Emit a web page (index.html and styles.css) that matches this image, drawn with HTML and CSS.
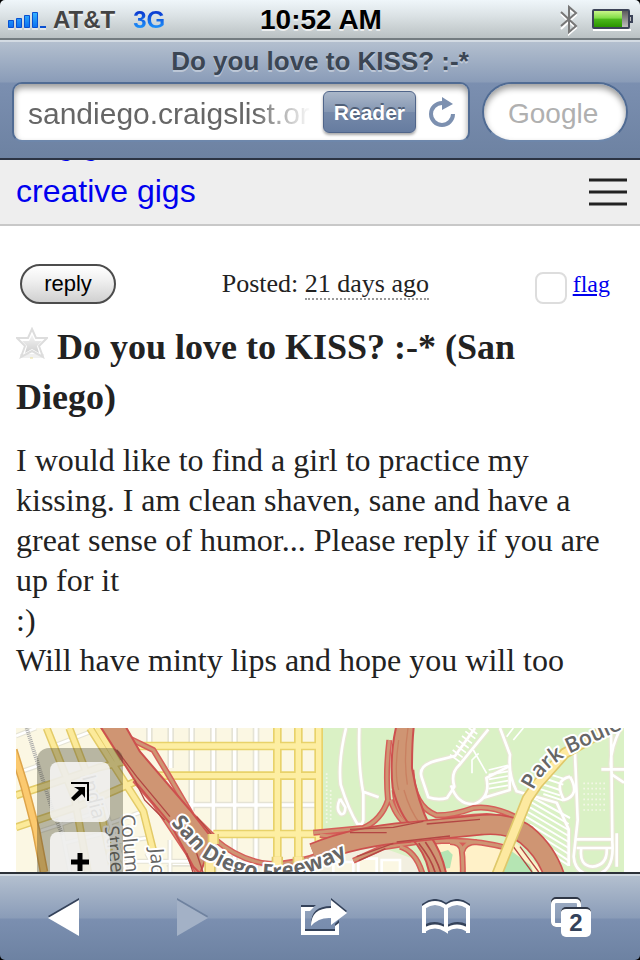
FILE: index.html
```html
<!DOCTYPE html>
<html lang="en">
<head>
    <meta charset="UTF-8">
    <meta name="viewport" content="width=device-width, initial-scale=1">
    <title>Do you love to KISS? :-*</title>
    <link rel="stylesheet" href="styles.css">
</head>
<body>
    <div class="phone">
        <div class="status-bar">
            <div class="carrier">
                <svg class="signal" width="39" height="20" viewBox="0 0 39 20" aria-hidden="true">
                    <defs>
                        <linearGradient id="bars" x1="0" y1="0" x2="0" y2="1">
                            <stop offset="0" stop-color="#35b4ff"/>
                            <stop offset="1" stop-color="#0a6ff0"/>
                        </linearGradient>
                    </defs>
                    <g fill="url(#bars)" stroke="#0a50d0">
                        <path d="M.5 10.500h5v7h-5zM8.500 8.500h5v9h-5zM16.500 5.500h5v12h-5zM24.500 2.500h5v15h-5z"/>
                    </g>
                    <path d="M32 16h6v2h-6z" fill="#0a50d0"/>
                    <path d="M0 19h6M8 19h6M16 19h6M24 19h6M32 19h6" stroke="#fff"/>
                </svg>
                <span>AT&amp;T</span>
                <span class="network">3G</span>
            </div>
            <div class="clock">10:52 AM</div>
            <div class="indicators">
                <svg width="18" height="32" viewBox="0 0 18 32" aria-hidden="true">
                    <path d="M1 9l15 14-7 6V4l7 6L1 24" fill="none" stroke="#fff" stroke-width="2" transform="translate(0 1)"/>
                    <path d="M1 8l15 14-7 6V3l7 6L1 22" fill="none" stroke="#777" stroke-width="2"/>
                </svg>
                <svg width="42" height="22" viewBox="0 0 42 22" aria-hidden="true">
                    <defs>
                        <linearGradient id="charge" x1="0" y1="0" x2="0" y2="1">
                            <stop offset="0" stop-color="#c9f58a"/>
                            <stop offset=".45" stop-color="#7fdc45"/>
                            <stop offset=".5" stop-color="#4cb81c"/>
                            <stop offset="1" stop-color="#2a9400"/>
                        </linearGradient>
                        <linearGradient id="empty" x1="0" y1="0" x2="0" y2="1">
                            <stop offset="0" stop-color="#555"/>
                            <stop offset="1" stop-color="#c4c4c4"/>
                        </linearGradient>
                    </defs>
                    <path d="M1 21h38" stroke="#fff" stroke-width="2"/>
                    <rect x="1" y="1" width="36" height="18" rx="1" fill="url(#empty)" stroke="#3c4358" stroke-width="2"/>
                    <path d="M2 2h28v16H2z" fill="url(#charge)"/>
                    <path d="M38 7h2v6h-2" fill="#bbb" stroke="#3c4358" stroke-width="2"/>
                </svg>
            </div>
        </div>

        <header class="browser-bar">
            <div class="page-title">Do you love to KISS? :-*</div>
            <form class="fields">
                <div class="field address">
                    <input type="text" class="url" aria-label="Address" value="sandiego.craigslist.org">
                    <button type="button" class="reader">Reader</button>
                    <button type="button" class="icon-button" aria-label="Reload">
                        <svg width="28" height="32" viewBox="0 0 28 32">
                            <path d="M14 7a11 11 0 1 0 11 11" fill="none" stroke="#7c90b0" stroke-width="4"/>
                            <path d="M14 1l11 7-11 6z" fill="#7c90b0"/>
                        </svg>
                    </button>
                </div>
                <input type="search" class="field search" aria-label="Search" placeholder="Google">
            </form>
        </header>

        <main class="page">
            <div class="breadcrumbs">
                <nav class="crumbs">
                    <a href="#">all gigs</a>
                    <a href="#">creative gigs</a>
                </nav>
                <button type="button" class="icon-button" aria-label="Menu">
                    <svg width="38" height="28" viewBox="0 0 38 28">
                        <path d="M0 2h38M0 14h38M0 26h38" stroke="#222" stroke-width="3"/>
                    </svg>
                </button>
            </div>

            <article class="posting">
                <div class="actions">
                    <button type="button" class="reply">reply</button>
                    <div class="posted">Posted: <time class="age">21 days ago</time></div>
                    <div class="flag">
                        <input type="checkbox" id="flag" aria-label="flag">
                        <a href="#">flag</a>
                    </div>
                </div>

                <h2 class="posting-title"><svg class="star" width="32" height="32" viewBox="0 0 32 32" aria-hidden="true">
                    <defs>
                        <linearGradient id="starfill" x1="0" y1="0" x2="0" y2="1">
                            <stop offset="0" stop-color="#f4f4f4"/>
                            <stop offset="1" stop-color="#d0d0d0"/>
                        </linearGradient>
                    </defs>
                    <path d="M4 29h24" stroke="#f0f0f0" stroke-width="4"/>
                    <path d="M16 2l4 9 11 0-8 8 4 11-11-6-11 6 4-11-8-8 11 0z" fill="#fff" stroke="#ddd" stroke-width="2"/>
                    <path d="M16 8l3 6 7 0-5 5 2 7-7-4-7 4 2-7-5-5 7 0z" fill="url(#starfill)"/>
                    <path d="M14 31h3" stroke="#eadf9a"/>
                </svg>Do you love to KISS? :-* (San Diego)</h2>

                <p class="posting-body">I would like to find a girl to practice my kissing. I am clean shaven, sane and have a great sense of humor... Please reply if you are up for it<br>:)<br>Will have minty lips and hope you will too</p>

                <div class="map">
                    <svg class="tiles" viewBox="48 24 1824 432" preserveAspectRatio="xMinYMin slice" role="img" aria-label="Map">
                        <defs>
                            <g id="grid-minor">
                                <path d="M448 24v60M512 24v120M575 24v250M640 24v432M704 24v432M768 24v432M560 255h400M500 430h460"/>
                            </g>
                            <g id="grid-major">
                                <path d="M832 24v432M895 24v432M956 24v340M400 78h560M470 167h490M640 342h320"/>
                            </g>
                            <g id="west-minor">
                                <path d="M48 48l60-24M160 78l110-42M48 160l70-24M100 340l170-56M330 310l110-40M190 370l200-50M320 370l120-16M380 424h240M510 360v96M180 300l30 156M310 250l70 206M440 400l30 56"/>
                            </g>
                            <g id="west-major">
                                <path d="M140 24l84 210 40 222M208 24l92 240 40 192M270 24l70 110 90 140 30 120M292 24l60 100M48 226l110-36 140-48 90-20M48 322l190-64 166-72"/>
                            </g>
                            <g id="park-paths">
                                <path d="M1038 24q-24 100-16 170 24 76 50 118h14l4-12V220q-16-80-12-196M1092 216l44 16M1020 236l16 26q0 24-14 20-16-14-2-46"/>
                                <path d="M1425 24l-60 84-56 14q-56 14-44 50l20 60q30 10 56 2l22-34q-12-40 14-64l88-108M1353 196q20 60 70 56 50-20 36-78l70-36v72l-80 24M1500 24l30 80q-6 60 20 110l120 34 36 80v110"/>
                                <path d="M1725 100l8 200-12 110q4 50 54 56 70-4 62-100l-4-340M1862 24q-40 80-26 140l36 24M1710 170q-50 10-18 70 50-14 18-70M1730 358h110M1730 384h110M1744 384q-8 54 34 56 46-6 42-56M1850 340v100M1804 148h68"/>
                            </g>
                            <g id="ramps">
                                <path d="M390 56l70 34 40 66 76 130 70 70M410 110l86 90 70 90M404 180l60 70 100 150 30 60"/>
                                <path d="M640 354q80 70 170 78 80 0 160-32"/>
                                <path d="M1168 60q-12 100-4 180-20 60-74 84l-150 14M1184 210q6 80 60 110M1172 240q20 60 60 80"/>
                                <path d="M1234 150q6 110 76 136 50 0 110-22 60-10 140 34M1300 310q80-20 160-22l90 10"/>
                                <path d="M1060 422l90-40 100-16M960 345q60 10 130-10M1290 366q120-14 240 20M1384 380q6 40 4 90M1200 380q50 14 70 90M1350 366q36 0 36 30 6-30 44-30"/>
                            </g>
                        </defs>

                        <rect x="48" y="24" width="920" height="432" fill="#fbf7e3"/>
                        <rect x="964" y="24" width="908" height="432" fill="#daf1c5"/>

                        <!-- downtown grid -->
                        <g fill="none">
                            <use href="#grid-minor" stroke="#e5e3d5" stroke-width="20"/>
                            <use href="#grid-minor" stroke="#fff" stroke-width="10"/>
                            <use href="#grid-major" stroke="#e8d26a" stroke-width="26"/>
                            <use href="#grid-major" stroke="#fdeea2" stroke-width="16"/>
                        </g>

                        <!-- streets west of the freeway -->
                        <g fill="none">
                            <use href="#west-minor" stroke="#e5e3d5" stroke-width="15"/>
                            <use href="#west-minor" stroke="#fff" stroke-width="8"/>
                            <path d="M80 24l72 230 34 90" stroke="#aaa" stroke-width="12" stroke-dasharray="3 3"/>
                            <use href="#west-major" stroke="#e3cb68" stroke-width="24"/>
                            <use href="#west-major" stroke="#fcea9a" stroke-width="15"/>
                            <path d="M40 90l34 110 34 130 24 126" stroke="#dda44a" stroke-width="26"/>
                            <path d="M40 90l34 110 34 130 24 126" stroke="#fbc96f" stroke-width="17"/>
                        </g>

                        <!-- park paths and parking rows -->
                        <g fill="none" stroke-linejoin="round">
                            <use href="#park-paths" stroke="#e8e6d4" stroke-width="15"/>
                            <use href="#park-paths" stroke="#fff" stroke-width="8"/>
                            <path d="M1350 104l30 22M1358 90l30 22M1368 76l30 22M1376 62l30 22M1386 48l30 22M1396 34l30 22M1406 24l26 18M1466 150l58-14M1466 164l58-10M1466 178l58-10M1466 192l58-10M1466 206l58-10M1420 90l40 70M1416 160v-40l20-20M1520 50l20-26M1540 60l30-36" stroke="#fff" stroke-width="5"/>
                            <path d="M1600 234l110 60M1596 248l110 64M1590 262l116 68M1584 276l122 72M1578 290l128 76M1590 314l116 70M1610 342l96 60M1640 378l66 44M1662 408l44 28M1620 190l60 20M1616 206l64 20M1630 222l60 20M1640 160l50 16M1630 174l60 20" stroke="#fff" stroke-width="6"/>
                            <path d="M1750 190h70M1750 206h70M1750 222h70M1750 238h70M1750 254h70M1750 270h70M980 160v150M992 210v90" stroke="#f3f7e6" stroke-width="5" stroke-dasharray="5 7"/>
                        </g>

                        <!-- blocks below the interchange -->
                        <path d="M960 410l180-30 110 40 20 36H960z" fill="#f2efe0"/>
                        <path d="M1000 456v-30h60v30M1075 456v-40h55v40M1145 456v-36h55v36" fill="#fbf7e3" stroke="#fff" stroke-width="8"/>
                        <path d="M1260 370l290 0 80 86H1310z" fill="#fff1c8"/>
                        <path d="M1300 404l44-14 14 14-8 40-40 6zM1530 390l60 44 10 22H1500z" fill="#b5e5b3"/>

                        <!-- freeway interchange -->
                        <g fill="none" stroke-linejoin="round">
                            <use href="#ramps" stroke="#d65e59" stroke-width="18"/>
                            <use href="#ramps" stroke="#cf9573" stroke-width="9"/>
                            <path d="M300 18l110 172 100 120 70 130 20 20 40-100-70-90L420 95 376 18z" fill="#cf9573" stroke="#cd504e" stroke-width="6"/>
                            <path d="M1190 14q-22 90-12 190 20 80 60 120h54q-40-80-56-180 0-80 6-130z" fill="#cf9573" stroke="#cd504e" stroke-width="6"/>
                            <path d="M1196 60q-14 100 0 150M1224 24q-14 90-2 170M1212 210q16 60 50 104" stroke="#c98061" stroke-width="4"/>
                            <path d="M1230 350q50 50 60 120h50q-12-70-50-124z" fill="#cf9573" stroke="#cd504e" stroke-width="6"/>
                            <path d="M1256 370q40 50 50 90M1276 366q34 50 46 90" stroke="#b34643" stroke-width="5"/>
                            <path d="M940 400q130-52 290-64l220-22q80-6 130 32 60 50 84 124" stroke="#cd504e" stroke-width="64"/>
                            <path d="M940 400q130-52 290-64l220-22q80-6 130 32 60 50 84 124" stroke="#cf9573" stroke-width="54"/>
                            <path d="M350 90l60 80 100 120M404 180l30 60 60 60M560 400l20 60M590 400l20 60M590 290l50 60M1050 328l130-6 90-18M1050 338h110M1280 312l160-14M1070 410l110-40M1076 422l80-36M1190 366l160-18M1540 380l56 76M1560 380l56 76" stroke="#b34643" stroke-width="4"/>
                        </g>

                        <path d="M640 342v30M832 410v46M895 410v46M630 420v36M1490 466l92-230 32-46 80-90 140-80" fill="none" stroke="#dfc86a" stroke-width="34"/>
                        <path d="M640 342v30M832 410v46M895 410v46M630 420v36M1490 466l92-230 32-46 80-90 140-80" fill="none" stroke="#fde9a0" stroke-width="24"/>

                        <!-- labels -->
                        <path id="freeway" d="M512 310l86 94q90 66 210 74 120-4 270-88" fill="none"/>
                        <path id="boulevard" d="M1600 212q24-60 110-112l180-84" fill="none"/>
                        <g class="map-label">
                            <text class="highway"><textPath href="#freeway">San Diego Freeway</textPath></text>
                            <text><textPath href="#boulevard">Park Boulevard</textPath></text>
                            <text class="street" transform="translate(362 284) rotate(85)">Columbia</text>
                            <text class="street" transform="translate(314 320) rotate(82)">Street</text>
                            <text class="street" transform="translate(246 170) rotate(76)">India</text>
                            <text class="street" transform="translate(450 386) rotate(86)">Jackdaw</text>
                        </g>
                    </svg>
                    <div class="map-controls">
                        <button type="button" aria-label="Full screen">
                            <svg width="20" height="20" viewBox="0 0 20 20">
                                <path d="M1 1h17v18" fill="none" stroke="#000" stroke-width="2"/>
                                <path d="M4 5h11v11l-3-4-8 7-3-3 8-8z" fill="#000"/>
                            </svg>
                        </button>
                        <button type="button" aria-label="Zoom in">
                            <svg width="18" height="18" viewBox="0 0 18 18">
                                <path d="M9 0v18M0 9h18" stroke="#000" stroke-width="5"/>
                            </svg>
                        </button>
                    </div>
                </div>
            </article>
        </main>

        <footer class="toolbar">
            <button type="button" aria-label="Back">
                <svg width="32" height="38" viewBox="0 0 32 38">
                    <path d="M0 18L31 0v3L2 20z" fill="#34425a"/>
                    <path d="M0 20L31 2v36z" fill="#fff"/>
                </svg>
            </button>
            <button type="button" aria-label="Forward" disabled>
                <svg width="32" height="38" viewBox="0 0 32 38">
                    <path d="M31 18L0 0v3l30 17z" fill="#6f829f"/>
                    <path d="M31 20L0 2v36z" fill="#a3b1c6"/>
                </svg>
            </button>
            <button type="button" aria-label="Share">
                <svg width="46" height="38" viewBox="0 0 46 38">
                    <g fill="#34425a">
                        <path d="M0 7h15l-5 4H4v20h30v-5l4-4v13H0z"/>
                        <path d="M10 26q0-18 20-18V0l16 13-16 13v-7q-12-2-20 7z"/>
                    </g>
                    <g fill="#fff">
                        <path d="M0 9h13l-4 4H4v20h30v-5l4-3v12H0z"/>
                        <path d="M10 28q0-18 20-18V2l16 13-16 12v-7q-12-1-20 8z"/>
                    </g>
                </svg>
            </button>
            <button type="button" aria-label="Bookmarks">
                <svg width="48" height="36" viewBox="0 0 48 36" fill="none" stroke-width="4">
                    <path d="M2 8V6q11-8 22 0 11-8 22 0v2M4 27q10-5 20 2 10-7 20-2" stroke="#34425a"/>
                    <path d="M2 34V8q11-8 22 0v23q-11-7-22 0M24 8q11-8 22 0v26M46 31q-11-7-22 0" stroke="#fff"/>
                </svg>
            </button>
            <button type="button" class="tabs" aria-label="Tabs">
                <svg width="32" height="32" viewBox="0 0 32 32" fill="none" stroke-width="4">
                    <rect x="2" y="2" width="26" height="26" rx="3" stroke="#2f3746"/>
                    <rect x="2" y="4" width="26" height="24" rx="3" stroke="#fff"/>
                </svg>
                <span class="count">2</span>
            </button>
        </footer>
    </div>
</body>
</html>
```

FILE: styles.css
```css
* {
    box-sizing: border-box;
}

body {
    margin: 0;
    background: #000;
}

button {
    font-family: inherit;
    cursor: pointer;
}

svg {
    display: block;
}

.phone {
    display: flex;
    flex-direction: column;
    height: 100vh;
    overflow: hidden;
    border-radius: 5px;
    font-family: "Liberation Sans", Arial, sans-serif;
}

/* Status bar */
.status-bar {
    display: grid;
    grid-template-columns: 1fr auto 1fr;
    align-items: center;
    height: 40px;
    padding: 2px 6px 0 8px;
    background: linear-gradient(#eff6fa, #dce3e6 40%, #bac1c3);
    border-bottom: 2px solid #747c80;
    font-weight: bold;
    text-shadow: 0 2px 0 rgba(255, 255, 255, 0.7);
}

.carrier {
    display: flex;
    align-items: center;
    gap: 6px;
    color: #444;
    font-size: 24px;
}

.network {
    margin-left: 12px;
    background: linear-gradient(#0a38d0 20%, #1f9cff 85%);
    background-clip: text;
    -webkit-background-clip: text;
    color: transparent;
    text-shadow: none;
}

.clock {
    font-size: 28px;
    color: #000;
}

.indicators {
    display: flex;
    justify-content: flex-end;
    align-items: center;
    gap: 14px;
}

/* Address and search */
.browser-bar {
    padding: 0 12px 16px;
    background: linear-gradient(#b5c1d0, #8a9cb8 42px, #7b8fb0 43px, #6d82a2);
    border-bottom: 2px solid #2c3444;
    box-shadow: inset 0 2px 0 #d3dbe3;
}

.page-title {
    overflow: hidden;
    line-height: 42px;
    font-size: 26px;
    font-weight: bold;
    color: #3b4654;
    text-align: center;
    text-shadow: 0 2px 0 rgba(255, 255, 255, 0.4);
    white-space: nowrap;
}

.fields {
    display: flex;
    gap: 12px;
}

.field {
    height: 60px;
    background: #fff;
    border: 2px solid #506b93;
    border-bottom-color: #6e87ab;
    box-shadow: inset 0 4px 6px rgba(0, 0, 0, 0.4);
}

.address {
    flex: 1;
    display: flex;
    align-items: center;
    gap: 12px;
    min-width: 0;
    padding: 0 12px 0 14px;
    border-radius: 10px;
}

.url {
    flex: 1;
    min-width: 0;
    padding: 4px 0 0;
    border: 0;
    outline: 0;
    background: none;
    font-family: inherit;
    font-size: 30px;
    color: #666;
    -webkit-mask-image: linear-gradient(to right, #000 80%, transparent);
    mask-image: linear-gradient(to right, #000 80%, transparent);
}

.reader {
    height: 42px;
    padding: 2px 10px 0;
    border: 1px solid #50658a;
    border-radius: 6px;
    background: linear-gradient(#aab7c9, #8496b2 50%, #7589a9 51%, #667ca0);
    box-shadow: 0 2px 3px rgba(0, 0, 0, 0.35);
    color: #fff;
    font-size: 21px;
    font-weight: bold;
    text-shadow: 0 -2px 0 #506078;
}

.icon-button {
    padding: 0;
    border: 0;
    background: none;
}

.search {
    width: 146px;
    padding: 4px 0 0 24px;
    border-radius: 30px;
    outline: 0;
    appearance: none;
    font-family: inherit;
    font-size: 28px;
}

.search::placeholder {
    color: #b0b0b0;
}

.search::-webkit-search-cancel-button {
    display: none;
}

/* Page */
.page {
    flex: 1;
    min-height: 0;
    display: flex;
    flex-direction: column;
    overflow: hidden;
    background: #fff;
    color: #222;
}

.breadcrumbs {
    display: flex;
    justify-content: space-between;
    align-items: center;
    flex-shrink: 0;
    height: 66px;
    padding: 0 13px 0 16px;
    overflow: hidden;
    background: #eee;
    border-bottom: 2px solid #c8c8c8;
}

/* scrolled so that the last crumb is in view */
.crumbs {
    display: flex;
    flex-direction: column;
    align-self: flex-end;
    padding-bottom: 9px;
    font-size: 32px;
    line-height: 48px;
}

.crumbs a {
    color: #00e;
    text-decoration: none;
}

.posting {
    flex: 1;
    min-height: 0;
    display: flex;
    flex-direction: column;
    padding: 38px 16px 0;
    font-family: "Liberation Serif", "Times New Roman", serif;
}

.actions {
    display: flex;
    justify-content: space-between;
    align-items: center;
    padding: 0 14px 0 4px;
}

.reply {
    width: 96px;
    height: 40px;
    padding: 0;
    border: 2px solid #4c4c4c;
    border-radius: 20px;
    background: linear-gradient(#fff, #f0f0f0 40%, #d0d0d0);
    color: #000;
    font-family: "Liberation Sans", Arial, sans-serif;
    font-size: 22px;
}

.posted {
    font-size: 26px;
    line-height: 30px;
}

.age {
    border-bottom: 2px dotted #999;
}

.flag {
    display: flex;
    align-items: center;
    gap: 6px;
    font-size: 24px;
}

.flag input {
    width: 32px;
    height: 32px;
    margin: 8px 0 0;
    appearance: none;
    border: 2px solid #ddd;
    border-radius: 8px;
    background: #fff;
}

.flag a {
    color: #00e;
}

.posting-title {
    margin: 18px 0;
    font-size: 36px;
    line-height: 50px;
}

.star {
    display: inline-block;
    margin-right: 9px;
    vertical-align: baseline;
}

.posting-body {
    margin: 0 0 48px;
    font-size: 32px;
    line-height: 40px;
}

/* Map */
.map {
    position: relative;
    flex: 1;
    min-height: 0;
    overflow: hidden;
}

.tiles {
    width: 100%;
    height: 100%;
}

.map-label {
    fill: #666;
    stroke: #fff;
    stroke-width: 12px;
    stroke-linejoin: round;
    paint-order: stroke;
    font-family: "Open Sans", "Noto Sans", sans-serif;
    font-size: 64px;
    font-weight: 600;
}

.map-label .highway {
    font-weight: 700;
}

.map-label .street {
    font-size: 58px;
    font-weight: 400;
}

.map-controls {
    position: absolute;
    top: 20px;
    left: 21px;
    display: flex;
    flex-direction: column;
    gap: 10px;
    padding: 14px 13px;
    border-radius: 12px;
    background: rgba(60, 60, 40, 0.35);
}

.map-controls button {
    display: flex;
    justify-content: center;
    align-items: center;
    width: 60px;
    height: 60px;
    padding: 0;
    border: 0;
    border-radius: 8px;
    background: rgba(248, 248, 248, 0.85);
}

/* Bottom toolbar */
.toolbar {
    display: grid;
    grid-template-columns: 128fr 130fr 132fr 112fr 138fr;
    flex-shrink: 0;
    height: 88px;
    background: linear-gradient(#b5c1d0, #8a9cb8 44px, #7b8fb0 45px, #6d82a2);
    border-top: 2px solid #2c3138;
    box-shadow: inset 0 2px 0 #d3dbe3;
}

.toolbar button {
    display: flex;
    justify-content: center;
    align-items: center;
    padding: 0;
    border: 0;
    background: none;
}

.tabs {
    position: relative;
}

.tabs svg {
    margin: 0 8px 8px 0;
}

.tabs .count {
    position: absolute;
    top: 50%;
    left: 50%;
    width: 30px;
    height: 30px;
    margin: -10px 0 0 -10px;
    border-top: 2px solid #2f3746;
    border-radius: 5px;
    background: #fff;
    color: #34425a;
    font-size: 24px;
    font-weight: bold;
    line-height: 28px;
}
```
